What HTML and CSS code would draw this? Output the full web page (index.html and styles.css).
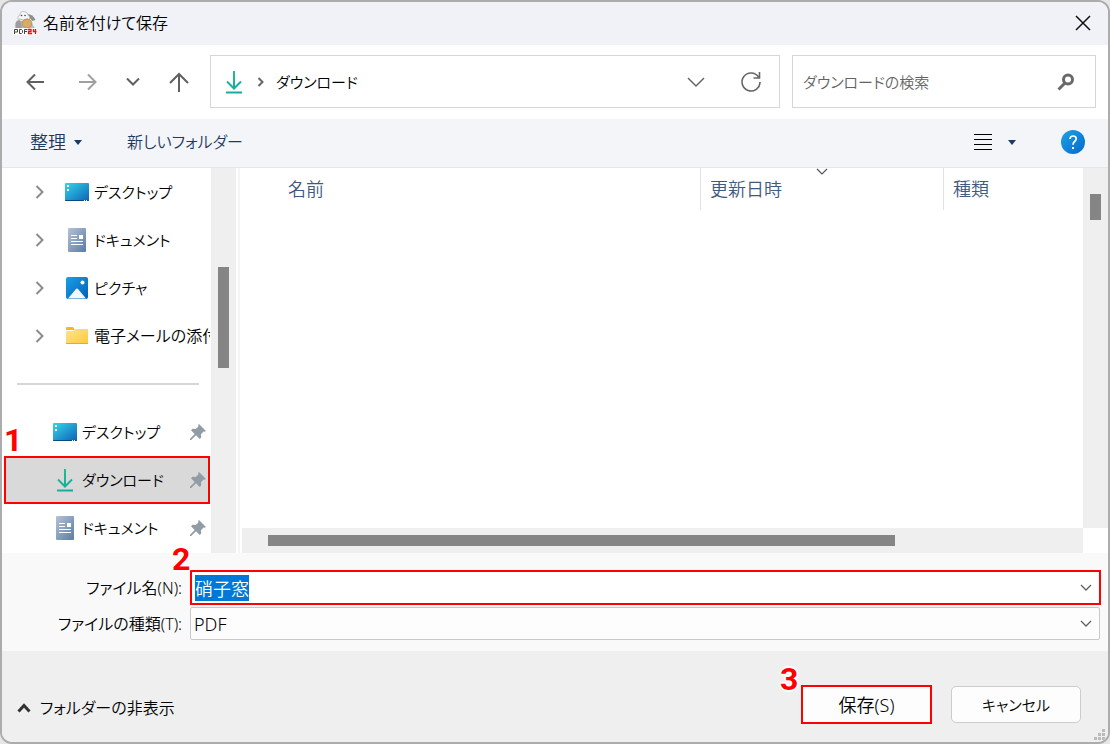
FILE: index.html
```html
<!DOCTYPE html>
<html lang="ja">
<head>
<meta charset="utf-8">
<meta name="viewport" content="width=device-width, initial-scale=1">
<title>名前を付けて保存</title>
<link rel="stylesheet" href="styles.css">
</head>
<body>
<svg class="defs" aria-hidden="true">
  <defs>
    <linearGradient id="g-desk" x1="0" y1="0" x2="1" y2="1"><stop offset="0" stop-color="#35d6e8"/><stop offset="1" stop-color="#0c62b8"/></linearGradient>
    <linearGradient id="g-doc" x1="0" y1="0" x2="1" y2="1"><stop offset="0" stop-color="#b4c3d6"/><stop offset="1" stop-color="#5c7ba4"/></linearGradient>
    <linearGradient id="g-pic" x1="0" y1="0" x2="1" y2="1"><stop offset="0" stop-color="#18a0ea"/><stop offset="1" stop-color="#0560b4"/></linearGradient>
    <linearGradient id="g-fold" x1="0" y1="0" x2="1" y2="1"><stop offset="0" stop-color="#ffe492"/><stop offset="1" stop-color="#fcc93a"/></linearGradient>
    <linearGradient id="g-help" x1="0" y1="0" x2="1" y2="1"><stop offset="0" stop-color="#1ea2e6"/><stop offset="1" stop-color="#0468cc"/></linearGradient>
    <linearGradient id="g-down" gradientUnits="userSpaceOnUse" x1="4" y1="0" x2="20" y2="24"><stop offset="0" stop-color="#27c08a"/><stop offset="1" stop-color="#10a8a4"/></linearGradient>
    <symbol id="i-desk" viewBox="0 0 24 24"><rect y="3" width="24" height="18" rx="1" fill="url(#g-desk)"/><path d="M0 20h24v0a1 1 0 0 1-1 1H1a1 1 0 0 1-1-1z" fill="#0b4a80"/><path d="M2 5h2v2H2zM2 9h2v2H2z" fill="#fff"/><path d="M19 20h1v1h-1zM21 20h1v1h-1z" fill="#fff"/></symbol>
    <symbol id="i-doc" viewBox="0 0 24 24"><rect x="3" width="18" height="24" rx="1" fill="url(#g-doc)"/><path d="M6 7.500h6M6 10.500h6M6 13.500h12M6 16.500h12" stroke="#fff" stroke-width="1.200"/><path d="M14 7h4v4h-4z" fill="#fff"/></symbol>
    <symbol id="i-pic" viewBox="0 0 24 24"><rect x="1" y="1" width="22" height="22" rx="2" fill="url(#g-pic)"/><path d="M3 22.500 11 13q1-1 2 0l8 9.500z" fill="#f2f8fe"/><circle cx="17.500" cy="6.500" r="2" fill="#fff"/></symbol>
    <symbol id="i-fold" viewBox="0 0 24 24"><path d="M1 4q0-1 1-1h6l2 3H1z" fill="#f5b91e"/><path d="M1 7h7l2-2h12q1 0 1 1v13q0 1-1 1H2q-1 0-1-1z" fill="url(#g-fold)"/><path d="M1 19.500h22" stroke="#e9ac1b"/></symbol>
    <symbol id="i-down" viewBox="0 0 24 24"><path d="M12 1v17M5 11.500l7 7 7-7M4 22.500h16" fill="none" stroke="url(#g-down)" stroke-width="2"/></symbol>
    <symbol id="i-pin" viewBox="0 0 16 16"><path d="M9 0l7 7-1.500.8-1-.2-2.500 2.700.2 3.200L9.700 15 6 11.300 1.200 16H0v-1.200L4.700 10 1 6.300 2.500 4.800l3.200.2L8.400 2.500 8.200 1z" fill="#929ca5"/></symbol>
    <symbol id="i-right" viewBox="0 0 10 14"><path d="M1.500 1l6 6-6 6" fill="none" stroke="#8b8b8b" stroke-width="2"/></symbol>
    <symbol id="i-drop" viewBox="0 0 12 8"><path d="M1 1l5 5 5-5" fill="none" stroke="#606060" stroke-width="1.300"/></symbol>
  </defs>
</svg>

<main class="dialog">
  <header class="titlebar">
    <svg class="logo" viewBox="0 0 24 24" aria-hidden="true">
      <path d="M2 17q-1-6 3-8l10-2 7 10z" fill="#bdbdbd"/>
      <path d="M14 3q6 0 8.500 6l-3 1-4-4z" fill="#8d8d8d"/>
      <path d="M5 8q-1-3 2-4 0-4 4-3.500 4 .5 4 3.500 3 2 1 5l-4 2-6-1z" fill="#f6f6f6" stroke="#a5a5a5" stroke-width=".6"/>
      <circle cx="8.500" cy="4.500" r=".8" fill="#444"/><circle cx="12" cy="4.500" r=".8" fill="#444"/>
      <path d="M6 8q4 2 9 0" fill="none" stroke="#999" stroke-width=".7"/>
      <path d="M3 11l4-2 2 8H3z" fill="#9d9d9d"/>
      <ellipse cx="14" cy="12.500" rx="5" ry="4.500" fill="#d8ab69" stroke="#a97b39" stroke-width=".6"/>
      <rect y="17" width="24" height="7" fill="#fff"/>
      <path d="M1.500 23v-4.500h3v2.500h-3M6.500 18.500h2l1 1v2l-1 1h-2zM11.500 23v-4.500h3M11.500 20.500h2.500" fill="none" stroke="#444"/>
      <path d="M15 18.500h3v2h-2.500v2H19M20.500 18v2.500h3M22.500 18v5" fill="none" stroke="#f01010" stroke-width="1.300"/>
    </svg>
    <h1 class="title">名前を付けて保存</h1>
    <button class="icon-btn close" aria-label="閉じる"><svg width="16" height="16" viewBox="0 0 16 16"><path d="M1 1l14 14M15 1 1 15" stroke="#111" stroke-width="1.500"/></svg></button>
  </header>

  <nav class="navbar" aria-label="移動">
    <div class="history">
      <button class="icon-btn" aria-label="戻る"><svg width="20" height="20" viewBox="0 0 20 20"><path d="M19 10H3M10 2.500 2.500 10l7.500 7.500" fill="none" stroke="#606060" stroke-width="2"/></svg></button>
      <button class="icon-btn" aria-label="進む"><svg width="20" height="20" viewBox="0 0 20 20"><path d="M2 10h16M11 2.500l7.500 7.500-7.500 7.500" fill="none" stroke="#a0a0a0" stroke-width="2"/></svg></button>
      <button class="icon-btn narrow" aria-label="最近表示した場所"><svg width="14" height="10" viewBox="0 0 14 10"><path d="M1 1.500l6 6 6-6" fill="none" stroke="#606060" stroke-width="2"/></svg></button>
      <button class="icon-btn" aria-label="上へ"><svg width="20" height="20" viewBox="0 0 20 20"><path d="M10 20V2M1 11l9-9 9 9" fill="none" stroke="#606060" stroke-width="2"/></svg></button>
    </div>
    <div class="address">
      <svg class="ico"><use href="#i-down"/></svg>
      <svg class="crumb-sep" viewBox="0 0 8 10"><path d="M1.500 1l4 4-4 4" fill="none" stroke="#666" stroke-width="2"/></svg>
      <a class="crumb kana" href="#downloads">ダウンロード</a>
      <button class="icon-btn push" aria-label="履歴"><svg width="18" height="12" viewBox="0 0 18 12"><path d="M1 2l8 8 8-8" fill="none" stroke="#666" stroke-width="1.500"/></svg></button>
      <button class="icon-btn" aria-label="更新"><svg width="22" height="22" viewBox="0 0 22 22"><path d="M18.500 6A9 9 0 1 0 20 11M19.500 1v6h-6" fill="none" stroke="#666" stroke-width="1.600"/></svg></button>
    </div>
    <div class="search">
      <input class="search-input kana" type="text" aria-label="検索" placeholder="ダウンロードの検索">
      <button class="icon-btn" aria-label="検索する"><svg width="18" height="18" viewBox="0 0 18 18"><circle cx="11" cy="6.500" r="4.500" fill="none" stroke="#6a6a6a" stroke-width="3"/><path d="M8 10l-6.500 6.500" stroke="#6a6a6a" stroke-width="3"/></svg></button>
    </div>
  </nav>

  <div class="toolbar">
    <button class="tool">整理 <svg width="8" height="5" viewBox="0 0 8 5"><path d="M0 0h8L4 5z" fill="#1c3a63"/></svg></button>
    <button class="tool mixed">新しいフォルダー</button>
    <button class="view push" aria-label="表示の変更"><svg width="18" height="18" viewBox="0 0 18 18"><path d="M0 1.500h18M0 6.500h18M0 11.500h18M0 16.500h18" stroke="#000"/></svg><svg width="8" height="5" viewBox="0 0 8 5"><path d="M0 0h8L4 5z" fill="#1c3a63"/></svg></button>
    <button class="help" aria-label="ヘルプ"><svg width="24" height="24" viewBox="0 0 24 24"><circle cx="12" cy="12" r="12" fill="url(#g-help)"/><path d="M9 9q0-3 3.200-3 3 0 3 2.800 0 1.500-1.600 2.700Q12 12.700 12 14.800" fill="none" stroke="#fff" stroke-width="1.700"/><path d="M11 17h2v2h-2z" fill="#fff"/></svg></button>
  </div>

  <section class="browser">
    <aside class="sidebar">
      <ul class="tree">
        <li><a class="node" href="#desktop"><svg class="arrow"><use href="#i-right"/></svg><svg class="ico"><use href="#i-desk"/></svg><span class="kana">デスクトップ</span></a></li>
        <li><a class="node" href="#documents"><svg class="arrow"><use href="#i-right"/></svg><svg class="ico"><use href="#i-doc"/></svg><span class="kana">ドキュメント</span></a></li>
        <li><a class="node" href="#pictures"><svg class="arrow"><use href="#i-right"/></svg><svg class="ico"><use href="#i-pic"/></svg><span class="kana">ピクチャ</span></a></li>
        <li><a class="node" href="#mail"><svg class="arrow"><use href="#i-right"/></svg><svg class="ico"><use href="#i-fold"/></svg><span class="mixed">電子メールの添付</span></a></li>
      </ul>
      <hr class="rule">
      <ul class="tree">
        <li><a class="node quick" href="#q-desktop"><svg class="ico"><use href="#i-desk"/></svg><span class="kana">デスクトップ</span><svg class="pin"><use href="#i-pin"/></svg></a></li>
        <li><a class="node quick current" href="#downloads" aria-current="true"><svg class="ico"><use href="#i-down"/></svg><span class="kana">ダウンロード</span><svg class="pin"><use href="#i-pin"/></svg></a></li>
        <li><a class="node quick" href="#q-documents"><svg class="ico"><use href="#i-doc"/></svg><span class="kana">ドキュメント</span><svg class="pin"><use href="#i-pin"/></svg></a></li>
      </ul>
    </aside>
    <div class="vbar side-bar"><div class="vthumb"></div></div>
    <div class="splitter"></div>
    <div class="files">
      <div class="pane">
        <table class="list">
          <thead><tr>
            <th class="col-name">名前</th>
            <th class="col-date"><svg class="sort" width="12" height="7" viewBox="0 0 12 7"><path d="M1 1l5 5 5-5" fill="none" stroke="#555" stroke-width="1.200"/></svg>更新日時</th>
            <th class="col-type">種類</th>
          </tr></thead>
        </table>
      </div>
      <div class="vbar list-bar"><div class="vthumb"></div></div>
      <div class="hbar"><div class="hthumb"></div></div>
    </div>
    <span class="step step-one">1</span>
  </section>

  <form class="fields">
    <label class="mixed" for="filename">ファイル名(N):</label>
    <div class="combo marked">
      <input id="filename" type="text" value="硝子窓">
      <svg class="drop"><use href="#i-drop"/></svg>
      <span class="step step-two">2</span>
    </div>
    <label class="mixed" for="filetype">ファイルの種類(T):</label>
    <div class="combo">
      <select id="filetype"><option>PDF</option></select>
      <svg class="drop"><use href="#i-drop"/></svg>
    </div>
  </form>

  <footer class="footer">
    <button class="hide-folders mixed"><svg width="14" height="10" viewBox="0 0 14 10"><path d="M1.500 8.500l5.500-6 5.500 6" fill="none" stroke="#333" stroke-width="3"/></svg>フォルダーの非表示</button>
    <div class="save-wrap push">
      <button class="btn save">保存(S)</button>
      <span class="step step-three">3</span>
    </div>
    <button class="btn kana">キャンセル</button>
    <svg class="grip" width="11" height="11" viewBox="0 0 11 11"><path d="M8 0h3v3H8zM4 4h3v3H4zM8 4h3v3H8zM0 8h3v3H0zM4 8h3v3H4zM8 8h3v3H8z" fill="#bbb"/></svg>
  </footer>
</main>
<script src="app.js"></script>
</body>
</html>
```
FILE: styles.css
```css
* { box-sizing: border-box; }

body {
  margin: 0;
  background: #e6e6e6;
  color: #000;
  font: 350 18px/24px "Noto Sans", "Noto Sans CJK JP", sans-serif;
  font-feature-settings: "palt";
}

button, input, select {
  font: inherit;
  font-feature-settings: inherit;
  color: inherit;
  margin: 0;
  padding: 0;
  border: 0;
  background: none;
  outline: 0;
}

button { cursor: pointer; }
a { color: inherit; text-decoration: none; }
svg { display: block; flex: none; }
.defs { position: absolute; width: 0; height: 0; }
.kana { font-size: 15px; }
.mixed { font-size: 16px; }
.push { margin-left: auto; }
.ico { width: 24px; height: 24px; }

.dialog {
  display: flex;
  flex-direction: column;
  min-height: 100vh;
  overflow: hidden;
  border: 2px solid #acacac;
  border-radius: 12px;
  background: #fff;
}

/* title bar */
.titlebar {
  display: flex;
  align-items: center;
  gap: 6px;
  height: 43px;
  padding: 0 9px 2px 11px;
  background: #f1f2f8;
}
.logo { width: 24px; height: 24px; }
.title { margin: 0; font-size: 16px; font-weight: inherit; }
.icon-btn { display: grid; place-items: center; width: 32px; height: 32px; flex: none; }
.narrow { width: 28px; }
.close { margin-left: auto; }

/* navigation */
.navbar {
  display: flex;
  gap: 12px;
  padding: 10px 12px 11px 17px;
}
.history { display: flex; align-items: center; gap: 20px; width: 179px; }
.history .narrow { margin: 0 -4px; }
.address, .search {
  display: flex;
  align-items: center;
  height: 53px;
  border: 1px solid #d6d6d6;
}
.address { flex: 1; padding: 0 12px 0 11px; gap: 11px; }
.crumb-sep { width: 8px; height: 10px; }
.address .push { margin-left: auto; margin-right: 12px; }
.search { width: 304px; padding: 0 13px 0 10px; }
.search-input { flex: 1; min-width: 0; }
.search-input::placeholder { color: #636363; opacity: 1; }

/* command bar */
.toolbar {
  display: flex;
  align-items: center;
  gap: 45px;
  height: 49px;
  padding: 0 23px 2px 28px;
  border-bottom: 1px solid #e5e7ea;
  background: #f4f5f8;
  color: #1c3a63;
}
.tool { display: flex; align-items: center; gap: 8px; }
.view { display: flex; align-items: center; gap: 16px; }

/* folder tree */
.browser { position: relative; display: flex; flex: 1; min-height: 385px; }
.sidebar { width: 209px; flex: none; overflow: hidden; }
.tree { margin: 0; padding: 0; list-style: none; }
.node {
  display: flex;
  align-items: center;
  gap: 5px;
  height: 48px;
  margin-right: 1px;
  padding-left: 33px;
  overflow: hidden;
  white-space: nowrap;
}
.arrow { width: 10px; height: 14px; margin-right: 15px; }
.quick { padding: 0 4px 0 51px; }
.pin { width: 16px; height: 16px; margin-left: auto; }
.current {
  margin: 0 1px 0 2px;
  padding: 0 2px 0 47px;
  border: 2px solid #f00;
  background: #d9d9d9;
}
.rule { height: 2px; margin: 23px 12px 23px 15px; border: 0; background: #d6d6d6; }

/* scroll bars */
.vbar { width: 25px; background: #efefef; }
.vthumb { width: 11px; margin-left: 7px; background: #858585; }
.side-bar { flex: none; padding-top: 99px; }
.side-bar .vthumb { height: 101px; }
.splitter { width: 4px; flex: none; border-right: 2px solid #f4f4f4; }

/* file list */
.files {
  display: grid;
  flex: 1;
  grid-template: 1fr 25px / 1fr 25px;
  min-width: 0;
}
.list-bar { padding-top: 26px; }
.list-bar .vthumb { height: 26px; }
.hbar { margin-left: 2px; background: #efefef; }
.hthumb { width: 627px; max-width: 90%; height: 11px; margin: 7px 0 0 26px; background: #858585; }
.list { width: 100%; border-spacing: 0; table-layout: fixed; color: #40597c; }
.list th {
  position: relative;
  height: 42px;
  padding: 0 9px;
  border-right: 1px solid #e2e2e2;
  text-align: left;
  font-weight: inherit;
}
.list .col-name { width: 461px; padding-left: 48px; }
.list .col-date { width: 243px; }
.list .col-type { border: 0; }
.sort { position: absolute; top: 0; left: 50%; margin-left: -6px; }

/* name and type */
.fields {
  display: grid;
  grid-template-columns: 180px 1fr;
  column-gap: 8px;
  row-gap: 2px;
  align-items: center;
  padding: 17px 7px 11px 0;
  background: #f9f9f9;
}
.fields label { text-align: right; }
.combo {
  position: relative;
  display: flex;
  align-items: center;
  height: 33px;
  margin-right: 1px;
  border: 1px solid #c9c9c9;
  border-radius: 2px;
  background: #fdfdfd;
}
.combo input, .combo select { flex: 1; height: 26px; padding: 0 32px 0 3px; appearance: none; }
.combo input::selection { background: #0078d7; color: #fff; }
.marked { height: 35px; margin: 0; border: 2px solid #f00; border-radius: 0; background: #fff; }
.drop { position: absolute; right: 7px; width: 12px; height: 8px; pointer-events: none; }

/* footer */
.footer {
  position: relative;
  display: flex;
  align-items: center;
  gap: 19px;
  height: 91px;
  padding: 16px 27px 0 15px;
  background: #efefef;
}
.hide-folders { display: flex; align-items: center; gap: 9px; padding-top: 6px; }
.save-wrap { position: relative; }
.btn {
  width: 130px;
  height: 37px;
  border: 1px solid #ccc;
  border-radius: 5px;
  background: #fdfdfd;
}
.save { width: 131px; height: 39px; border: 2px solid #f00; border-radius: 0; display: block; }
.grip { position: absolute; right: 3px; bottom: 2px; }

/* numbered callouts */
.step {
  position: absolute;
  color: #f00;
  font: 700 32px/32px Roboto, "Liberation Sans", sans-serif;
  text-shadow: -2px 0 #fff, 2px 0 #fff, 0 -2px #fff, 0 2px #fff, 1px 1px #fff, -1px -1px #fff;
}
.step-one { left: 2px; top: 256px; }
.step-two { left: -20px; top: -29px; }
.step-three { left: -21px; top: -22px; }
```
FILE: app.js
```js
const filename = document.getElementById("filename");
filename.focus();
filename.select();
```
